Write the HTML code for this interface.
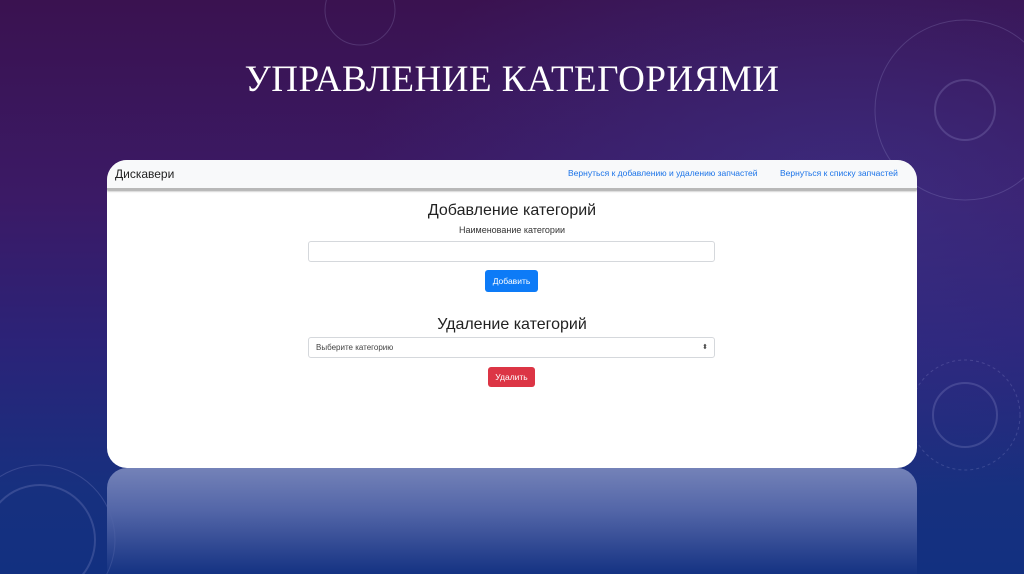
<!DOCTYPE html>
<html><head><meta charset="utf-8"><style>
html,body{margin:0;width:1024px;height:574px;overflow:hidden}
body{position:relative;font-family:"Liberation Sans","DejaVu Sans",sans-serif;
background:
radial-gradient(ellipse 500px 300px at 850px 200px,rgba(60,60,150,.5),transparent),
linear-gradient(180deg,#3a1250 0%,#3b1a66 35%,#2b2378 60%,#17307f 85%,#123080 100%);}
.title{position:absolute;top:58px;left:0;width:1024px;text-align:center;color:#fff;font-family:"Liberation Serif",serif;font-size:37px;letter-spacing:0.5px;line-height:44px}
.card{position:absolute;left:107px;top:160px;width:810px;height:308px;background:#fff;border-radius:20px;overflow:hidden}
.refl{position:absolute;left:107px;top:468px;width:810px;height:106px;border-radius:20px 20px 0 0;background:linear-gradient(180deg,#7482b8 0%,#5366a8 40%,rgba(30,60,140,.2) 100%)}
.nav{height:28px;background:#f8f9fa;border-bottom:2px solid #b8b8b8;box-shadow:0 1px 2px #999;position:relative;font-size:11px}
.nav .b{position:absolute;left:8px;top:7px;font-size:12px;color:#222}
.nav .l{position:absolute;top:8px;font-size:8.5px;color:#1a73e8}
.c{position:absolute;left:0;width:810px;text-align:center}
.inp{position:absolute;left:201px;width:405px;height:19px;border:1px solid #d5d8dc;border-radius:3px;background:#fff}
.btn{position:absolute;color:#fff;font-size:8.5px;text-align:center;border-radius:3px}
</style></head><body>
<svg width="1024" height="574" style="position:absolute;left:0;top:0" fill="none" stroke="rgba(180,180,230,.2)">
<circle cx="965" cy="110" r="30" stroke-width="2"/><circle cx="965" cy="110" r="90"/><circle cx="360" cy="10" r="35"/>
<circle cx="965" cy="415" r="32" stroke-width="2"/><circle cx="965" cy="415" r="55" stroke-dasharray="3 3"/>
<circle cx="40" cy="540" r="55" stroke-width="2"/><circle cx="40" cy="540" r="75"/>
</svg>
<div class="title">УПРАВЛЕНИЕ КАТЕГОРИЯМИ</div>
<div class="refl"></div>
<div class="card">
<div class="nav"><span class="b">Дискавери</span><span class="l" style="left:461px">Вернуться к добавлению и удалению запчастей</span><span class="l" style="left:673px">Вернуться к списку запчастей</span></div>
<div class="c" style="top:42px;font-size:16px;color:#222">Добавление категорий</div>
<div class="c" style="top:65px;font-size:9px;color:#333">Наименование категории</div>
<div class="inp" style="top:81px"></div>
<div class="btn" style="left:378px;top:110px;width:53px;height:22px;line-height:22px;background:#0d7bf7">Добавить</div>
<div class="c" style="top:156px;font-size:16px;color:#222">Удаление категорий</div>
<div class="inp" style="top:177px;font-size:8px;color:#444;line-height:19px"><span style="position:absolute;left:7px">Выберите категорию</span><span style="position:absolute;right:6px;font-size:7px">⬍</span></div>
<div class="btn" style="left:381px;top:207px;width:47px;height:20px;line-height:20px;background:#dc3545">Удалить</div>
</div>
</body></html>
